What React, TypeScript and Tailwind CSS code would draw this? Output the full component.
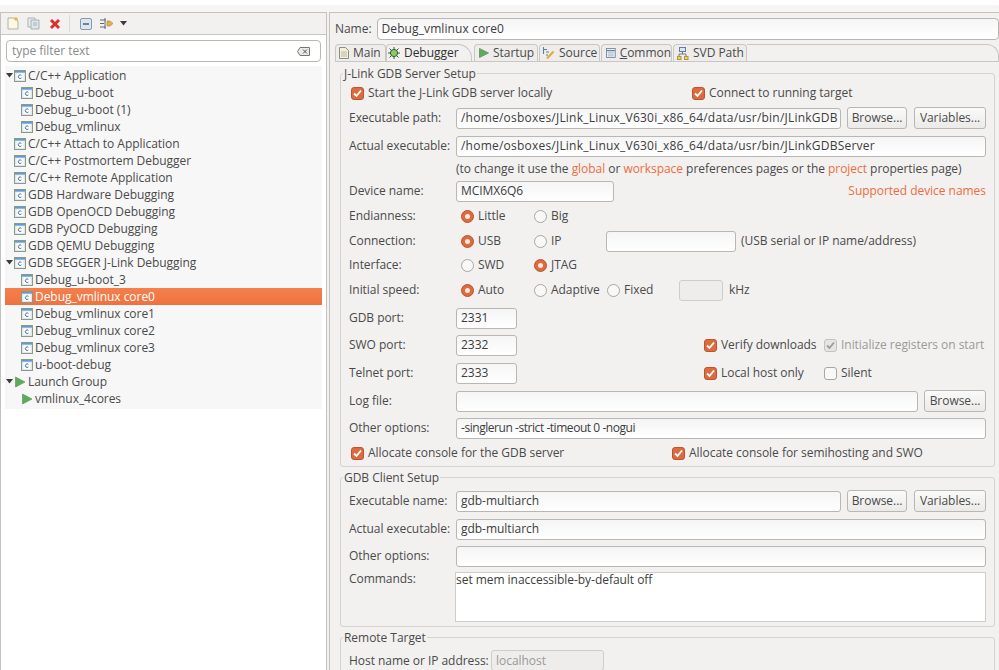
import React from "react"

// --- Data ---
type TreeItem = { label: string; depth: 0 | 1; kind?: "c" | "run"; open?: boolean; selected?: boolean }

const TREE: TreeItem[] = [
  { label: "C/C++ Application", depth: 0, open: true },
  { label: "Debug_u-boot", depth: 1 },
  { label: "Debug_u-boot (1)", depth: 1 },
  { label: "Debug_vmlinux", depth: 1 },
  { label: "C/C++ Attach to Application", depth: 0 },
  { label: "C/C++ Postmortem Debugger", depth: 0 },
  { label: "C/C++ Remote Application", depth: 0 },
  { label: "GDB Hardware Debugging", depth: 0 },
  { label: "GDB OpenOCD Debugging", depth: 0 },
  { label: "GDB PyOCD Debugging", depth: 0 },
  { label: "GDB QEMU Debugging", depth: 0 },
  { label: "GDB SEGGER J-Link Debugging", depth: 0, open: true },
  { label: "Debug_u-boot_3", depth: 1 },
  { label: "Debug_vmlinux core0", depth: 1, selected: true },
  { label: "Debug_vmlinux core1", depth: 1 },
  { label: "Debug_vmlinux core2", depth: 1 },
  { label: "Debug_vmlinux core3", depth: 1 },
  { label: "u-boot-debug", depth: 1 },
  { label: "Launch Group", depth: 0, kind: "run", open: true },
  { label: "vmlinux_4cores", depth: 1, kind: "run" },
]

const FONT = "font-['Open_Sans','Noto_Sans',sans-serif] text-[12px] tracking-[-0.04px] text-[#4a4a4a]"

// --- Icons ---
const CIcon = () => (
  <svg width="12" height="12" viewBox="0 0 12 12" className="shrink-0">
    <rect x="0.5" y="0.5" width="11" height="11" fill="#dfe8ef" stroke="#8b9a84" />
    <rect x="1" y="1" width="10" height="1.6" fill="#5d9ad8" />
    <rect x="2.5" y="3.5" width="7" height="6.5" fill="#fff" />
    <path d="M7.4 5.4 A1.8 1.8 0 1 0 7.4 8" fill="none" stroke="#4a6f94" strokeWidth="1" />
  </svg>
)

const RunIcon = () => (
  <svg width="12" height="12" viewBox="0 0 12 12" className="shrink-0">
    <path d="M1.5 1 L11 6 L1.5 11 Z" fill="#5cab5a" stroke="#6f9d6a" strokeWidth="0.8" />
  </svg>
)

const Caret = () => (
  <svg width="7" height="5" viewBox="0 0 7 5" className="shrink-0">
    <path d="M0 0 H7 L3.5 4.5 Z" fill="#3c3c3c" />
  </svg>
)

const Check = ({ on = false, disabled = false }: { on?: boolean; disabled?: boolean }) => (
  <span
    className={
      "flex h-[13px] w-[13px] shrink-0 items-center justify-center rounded-[3px] border " +
      (disabled
        ? "border-[#c4c2c0] bg-[#e6e5e3]"
        : on
          ? "border-[#b9562f] bg-[#dd6b3f]"
          : "border-[#a9a7a4] bg-[#f8f8f7]")
    }
  >
    {on && (
      <svg width="11" height="11" viewBox="0 0 11 11">
        <path d="M2 5.5 L4.5 8 L9 2.5" fill="none" stroke={disabled ? "#9b9b9b" : "#fff"} strokeWidth="1.8" />
      </svg>
    )}
  </span>
)

const Radio = ({ on = false }: { on?: boolean }) => (
  <span
    className={
      "flex h-[13px] w-[13px] shrink-0 items-center justify-center rounded-full border " +
      (on ? "border-[#b9562f] bg-[#dd6b3f]" : "border-[#a9a7a4] bg-[#f8f8f7]")
    }
  >
    {on && <span className="h-[5px] w-[5px] rounded-full bg-[#fbe9e0]" />}
  </span>
)

// --- Small widgets ---
const Input = ({ value = "", disabled = false, className = "" }: { value?: string; disabled?: boolean; className?: string }) => (
  <div
    className={
      "flex h-[21px] items-center overflow-hidden whitespace-nowrap rounded-[3px] border px-[4px] " +
      (disabled
        ? "border-[#cfcdca] bg-[#eeedeb] text-[#9a9a9a] "
        : "border-[#b9b7b4] bg-gradient-to-b from-[#f5f5f5] to-white text-[#3c3c3c] ") +
      className
    }
  >
    {value}
  </div>
)

const Btn = ({ label, className = "" }: { label: string; className?: string }) => (
  <div
    className={
      "flex h-[22px] items-center justify-center rounded-[3px] border border-[#b9b7b4] bg-gradient-to-b from-[#fafafa] to-[#ebeae8] " +
      className
    }
  >
    {label}
  </div>
)

const Row = ({ h, children }: { h: string; children: React.ReactNode }) => (
  <div className={"flex items-center whitespace-nowrap " + h}>{children}</div>
)

const Label = ({ children }: { children: React.ReactNode }) => <div className="w-[107px] shrink-0">{children}</div>

const Opt = ({ label, on, w, radio }: { label: string; on?: boolean; w: string; radio?: boolean }) => (
  <div className={"flex items-center gap-[4px] " + w}>
    {radio ? <Radio on={on} /> : <Check on={on} />}
    <span>{label}</span>
  </div>
)

const Group = ({ title, className, children }: { title: string; className: string; children?: React.ReactNode }) => (
  <div className={"relative shrink-0 rounded-[3px] border border-[#d5d3d0] pl-[8px] " + className}>
    <span className="absolute left-[2px] top-[-9px] bg-[#f2f1f0] px-px">{title}</span>
    {children}
  </div>
)

const Tab = ({ label, icon, className }: { label: React.ReactNode; icon: React.ReactNode; className: string }) => (
  <div className={"flex h-[17px] shrink-0 items-center gap-[4px] rounded-t-[4px] border border-b-0 border-[#c9c7c4] " + className}>
    {icon}
    <span>{label}</span>
  </div>
)

// --- Panels ---
const Sidebar = () => (
  <aside className="flex h-full w-[327px] shrink-0 flex-col border-l border-r border-t border-[#c4c2bf] bg-white">
    <div className="flex h-[22px] shrink-0 items-center border-b border-[#c9c7c4] bg-[#f2f1f0] pl-[6px]">
      <svg width="12" height="13" viewBox="0 0 12 13">
        <path d="M1 1 H8 L11 4 V12 H1 Z" fill="#fbf8e8" stroke="#b4b29c" />
        <path d="M9 0 V4 M7 2 H11" stroke="#e8b93c" strokeWidth="1.3" />
      </svg>
      <svg width="13" height="13" viewBox="0 0 13 13" className="ml-[8px]">
        <path d="M1 1 H8 V10 H1 Z" fill="#e8edf0" stroke="#a9b2b4" />
        <path d="M4 3 H12 V12 H4 Z" fill="#dfe6ea" stroke="#a9b2b4" />
        <path d="M6 6 H10 M6 8 H10" stroke="#a9b2b4" />
      </svg>
      <svg width="12" height="12" viewBox="0 0 12 12" className="ml-[9px]">
        <path d="M2 2 L10 10 M10 2 L2 10" stroke="#d9302c" strokeWidth="3" />
      </svg>
      <div className="ml-[8px] h-[17px] w-px bg-[#dcdad7]" />
      <svg width="12" height="12" viewBox="0 0 12 12" className="ml-[10px]">
        <rect x="0.5" y="0.5" width="11" height="11" rx="1.5" fill="#dde7ee" stroke="#7f9cb4" />
        <path d="M3 6 H9" stroke="#44607a" strokeWidth="1.5" />
      </svg>
      <svg width="14" height="13" viewBox="0 0 14 13" className="ml-[8px]">
        <path d="M0 3 H6 M0 6.5 H4 M0 10 H6 M5 1 V12" stroke="#5c6a72" strokeWidth="1" />
        <path d="M7 4 H10 L13 6.5 L10 9 H7 Z" fill="#e5b04a" stroke="#b98a2c" strokeWidth="0.7" />
      </svg>
      <span className="ml-[6px]">
        <Caret />
      </span>
    </div>
    <div className="shrink-0 px-[5px] pb-[4px] pt-[5px]">
      <div className="flex h-[22px] items-center justify-between rounded-[4px] border border-[#b9b7b4] bg-white pl-[5px] pr-[10px] text-[#8a8a8a]">
        <span>type filter text</span>
        <svg width="13" height="9" viewBox="0 0 13 9">
          <path d="M3 0.5 H12.5 V8.5 H3 L0.5 4.5 Z" fill="#eceae8" stroke="#77756f" />
          <path d="M6 2.5 L10 6.5 M10 2.5 L6 6.5" stroke="#55534f" />
        </svg>
      </div>
    </div>
    <ul className="mx-[4px] bg-[#f7f7f7] pb-[2px] pt-[1px]">
      {TREE.map((t) => (
        <li
          key={t.label}
          className={
            "flex h-[17px] items-center whitespace-nowrap " +
            (t.depth === 0 ? "pl-[1px] " : "pl-[8px] ") +
            (t.selected ? "bg-gradient-to-b from-[#f4804c] to-[#ee7240] text-white" : "")
          }
        >
          <span className="flex w-[8px] shrink-0 items-center">{t.open && <Caret />}</span>
          {t.kind === "run" ? <RunIcon /> : <CIcon />}
          <span className="ml-[2px]">{t.label}</span>
        </li>
      ))}
    </ul>
  </aside>
)

const Link = ({ children }: { children: React.ReactNode }) => <span className="text-[#ee6d3d]">{children}</span>

const Editor = () => (
  <main className="flex h-full min-w-0 flex-1 flex-col overflow-hidden border-l border-t border-[#c4c2bf] bg-[#f2f1f0] pl-[5px]">
    <div className="flex h-[31px] shrink-0 items-center gap-[5px]">
      <span>Name:</span>
      <Input value="Debug_vmlinux core0" className="h-[22px] flex-1 rounded-[4px] tracking-[0.1px]" />
    </div>
    <div className="flex h-[17px] shrink-0 items-end">
      <Tab
        label="Main"
        className="w-[51px] bg-[#eeedeb] pl-[3px]"
        icon={
          <svg width="10" height="12" viewBox="0 0 10 12">
            <path d="M0.5 0.5 H6.5 L9.5 3.5 V11.5 H0.5 Z" fill="#f4efd8" stroke="#8c8c80" />
            <path d="M2 5 H8 M2 7 H8 M2 9 H8" stroke="#b8b8a8" />
          </svg>
        }
      />
      <Tab
        label="Debugger"
        className="w-[86px] rounded-tr-[14px] bg-[#f2f1f0] pl-px text-[#2f2f2f]"
        icon={
          <svg width="12" height="12" viewBox="0 0 12 12">
            <path d="M6 0 V12 M0 6 H12 M1.5 1.5 L10.5 10.5 M10.5 1.5 L1.5 10.5" stroke="#2f5f3a" />
            <circle cx="6" cy="6" r="3.6" fill="#8ec868" stroke="#2f5f3a" />
          </svg>
        }
      />
      <Tab
        label="Startup"
        className="ml-[2px] w-[64px] bg-[#eeedeb] pl-[4px]"
        icon={
          <svg width="10" height="10" viewBox="0 0 10 10">
            <path d="M0.5 0.5 L9.5 5 L0.5 9.5 Z" fill="#5cab5a" stroke="#6f9d6a" />
          </svg>
        }
      />
      <Tab
        label="Source"
        className="ml-[1px] w-[61px] bg-[#eeedeb] pl-[2px]"
        icon={
          <svg width="13" height="13" viewBox="0 0 13 13">
            <path d="M1.5 0 V7 M1 2.5 H5 M4 5 H7 M4 8 H6" stroke="#5b7fa8" strokeWidth="1.1" />
            <path d="M5 11.5 L11.5 4.5" stroke="#e2a93b" strokeWidth="2" />
          </svg>
        }
      />
      <Tab
        label={
          <>
            <span className="underline">C</span>ommon
          </>
        }
        className="ml-[1px] w-[71px] bg-[#eeedeb] pl-[4px]"
        icon={
          <svg width="12" height="12" viewBox="0 0 12 12">
            <rect x="0.5" y="0.5" width="11" height="11" fill="#e6ecf4" stroke="#6a7f99" />
            <path d="M1 3 H11" stroke="#6a7f99" strokeWidth="1.5" />
            <path d="M2.5 5.5 H9.5 M2.5 7.5 H9.5 M2.5 9.5 H9.5" stroke="#a9b8c9" />
          </svg>
        }
      />
      <Tab
        label="SVD Path"
        className="ml-[1px] w-[74px] bg-[#eeedeb] pl-[3px]"
        icon={
          <svg width="12" height="13" viewBox="0 0 12 13">
            <rect x="2.5" y="0.5" width="6" height="4" fill="#dbe6f2" stroke="#5f7ea5" />
            <path d="M5.5 4.5 V7 M2 7 H9 M2 7 V9 M9 7 V9" stroke="#7a7a7a" />
            <rect x="0.5" y="9.5" width="3.5" height="3" fill="#f3d46a" stroke="#b2962e" />
            <rect x="7.5" y="9.5" width="3.5" height="3" fill="#f3d46a" stroke="#b2962e" />
          </svg>
        }
      />
      <div className="h-[17px] flex-1 rounded-tr-[12px] border-r border-t border-[#c9c7c4]" />
    </div>
    <div className="flex flex-1 flex-col border-t border-[#c9c7c4] pl-[5px] pr-[4px] pt-[11px]">
      <Group title="J-Link GDB Server Setup" className="h-[394px] pt-[7px]">
        <Row h="h-[24px]">
          <Opt label="Start the J-Link GDB server locally" on w="ml-[2px] w-[341px]" />
          <Opt label="Connect to running target" on w="" />
        </Row>
        <Row h="h-[26px]">
          <Label>Executable path:</Label>
          <Input value="/home/osboxes/JLink_Linux_V630i_x86_64/data/usr/bin/JLinkGDB" className="w-[385px] tracking-[0.22px]" />
          <Btn label="Browse..." className="ml-[6px] w-[60px]" />
          <Btn label="Variables..." className="ml-[7px] w-[72px]" />
        </Row>
        <Row h="h-[30px]">
          <Label>Actual executable:</Label>
          <Input value="/home/osboxes/JLink_Linux_V630i_x86_64/data/usr/bin/JLinkGDBServer" className="w-[530px] tracking-[0.22px]" />
        </Row>
        <Row h="h-[16px]">
          <Label>&nbsp;</Label>
          <span>
            (to change it use the <Link>global</Link> or <Link>workspace</Link> preferences pages or the{" "}
            <Link>project</Link> properties page)
          </span>
        </Row>
        <Row h="h-[28px]">
          <Label>Device name:</Label>
          <Input value="MCIMX6Q6" className="w-[158px]" />
          <span className="ml-auto mr-[8px]">
            <Link>Supported device names</Link>
          </span>
        </Row>
        <Row h="h-[22px]">
          <Label>Endianness:</Label>
          <Opt radio on label="Little" w="ml-[5px] w-[73px]" />
          <Opt radio label="Big" w="" />
        </Row>
        <Row h="h-[28px]">
          <Label>Connection:</Label>
          <Opt radio on label="USB" w="ml-[5px] w-[73px]" />
          <Opt radio label="IP" w="w-[72px]" />
          <Input className="w-[130px]" />
          <span className="ml-[5px]">(USB serial or IP name/address)</span>
        </Row>
        <Row h="h-[20px]">
          <Label>Interface:</Label>
          <Opt radio label="SWD" w="ml-[5px] w-[73px]" />
          <Opt radio on label="JTAG" w="" />
        </Row>
        <Row h="h-[30px]">
          <Label>Initial speed:</Label>
          <Opt radio on label="Auto" w="ml-[5px] w-[73px]" />
          <Opt radio label="Adaptive" w="w-[73px]" />
          <Opt radio label="Fixed" w="w-[72px]" />
          <Input disabled className="w-[44px]" />
          <span className="ml-[6px]">kHz</span>
        </Row>
        <Row h="h-[26px]">
          <Label>GDB port:</Label>
          <Input value="2331" className="w-[61px]" />
        </Row>
        <Row h="h-[28px]">
          <Label>SWO port:</Label>
          <Input value="2332" className="w-[61px]" />
          <Opt label="Verify downloads" on w="ml-[187px] w-[120px]" />
          <div className="flex items-center gap-[4px] text-[#9a9a9a]">
            <Check on disabled />
            <span>Initialize registers on start</span>
          </div>
        </Row>
        <Row h="h-[28px]">
          <Label>Telnet port:</Label>
          <Input value="2333" className="w-[61px]" />
          <Opt label="Local host only" on w="ml-[187px] w-[120px]" />
          <Opt label="Silent" w="" />
        </Row>
        <Row h="h-[28px]">
          <Label>Log file:</Label>
          <Input className="w-[462px]" />
          <Btn label="Browse..." className="ml-[6px] w-[62px]" />
        </Row>
        <Row h="h-[26px]">
          <Label>Other options:</Label>
          <Input value="-singlerun -strict -timeout 0 -nogui" className="w-[530px] tracking-[-0.45px]" />
        </Row>
        <Row h="h-[24px]">
          <Opt label="Allocate console for the GDB server" on w="ml-[2px] w-[321px]" />
          <Opt label="Allocate console for semihosting and SWO" on w="" />
        </Row>
      </Group>
      <Group title="GDB Client Setup" className="mt-[10px] h-[150px] pt-[12px]">
        <Row h="h-[22px]">
          <Label>Executable name:</Label>
          <Input value="gdb-multiarch" className="w-[385px]" />
          <Btn label="Browse..." className="ml-[6px] w-[60px]" />
          <Btn label="Variables..." className="ml-[7px] w-[72px]" />
        </Row>
        <Row h="h-[28px] mt-[3px]">
          <Label>Actual executable:</Label>
          <Input value="gdb-multiarch" className="w-[530px]" />
        </Row>
        <Row h="h-[26px]">
          <Label>Other options:</Label>
          <Input className="w-[530px]" />
        </Row>
        <div className="mt-[3px] flex leading-[13px]">
          <Label>Commands:</Label>
          <div className="-ml-[1px] h-[50px] w-[531px] border border-[#cfcdca] bg-white text-[#3c3c3c]">
            set mem inaccessible-by-default off
          </div>
        </div>
      </Group>
      <Group title="Remote Target" className="mt-[10px] h-[60px] pt-[12px]">
        <Row h="h-[21px]">
          <span className="w-[142px] shrink-0">Host name or IP address:</span>
          <Input disabled value="localhost" className="w-[113px]" />
        </Row>
      </Group>
    </div>
  </main>
)

export default function App() {
  return (
    <div className={"flex h-[670px] w-[999px] flex-col overflow-hidden bg-white " + FONT}>
      <div className="flex h-[12px] shrink-0 flex-col justify-end">
        <div className="h-[7px] bg-[#f6f5f4]" />
      </div>
      <div className="flex min-h-0 flex-1 gap-[2px] bg-[#f2f1f0]">
        <Sidebar />
        <Editor />
      </div>
    </div>
  )
}
